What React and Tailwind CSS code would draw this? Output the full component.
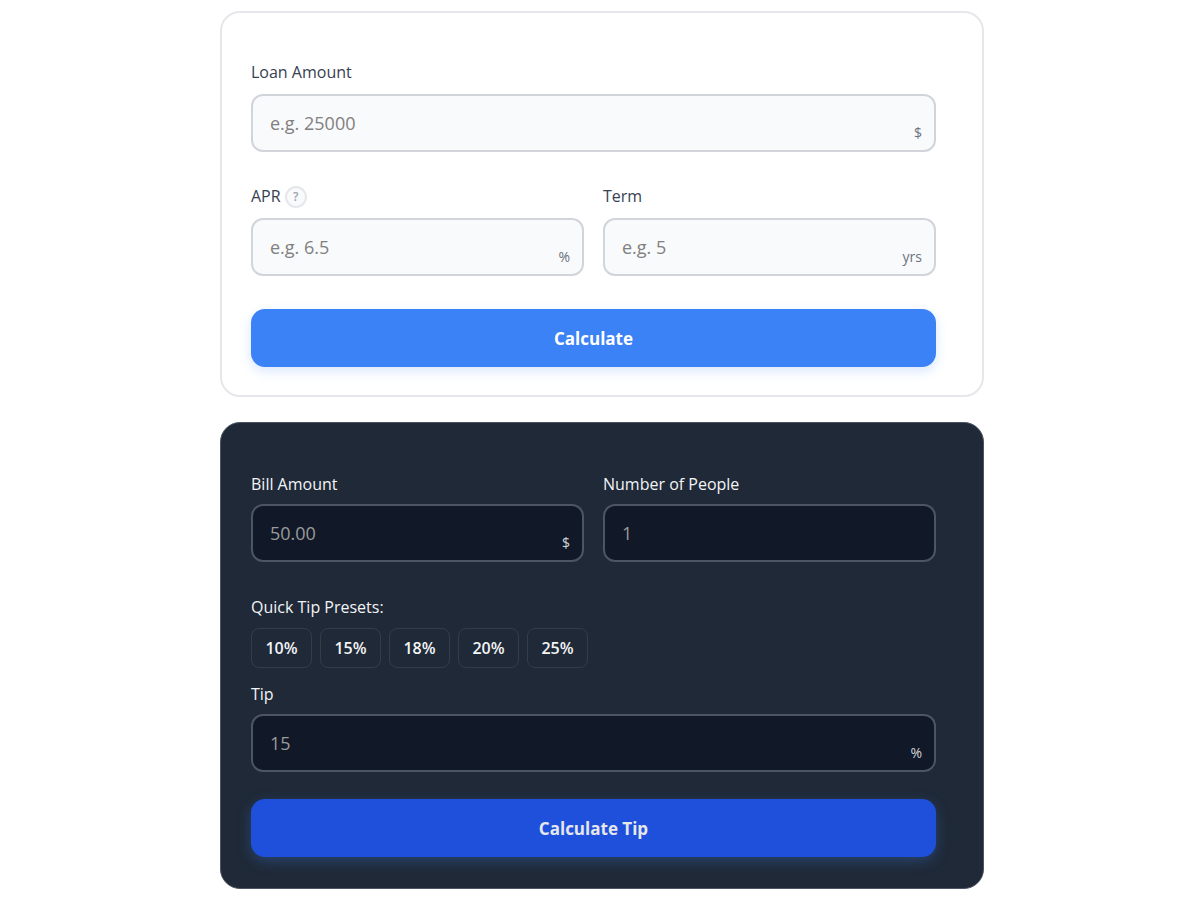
import React, { useState } from "react";

const tipPresets = [10, 15, 18, 20, 25];

const themes = {
  light: {
    card: "border-2 border-[#e5e7eb] bg-white pt-[47px] pr-[46px] pb-7 pl-[29px]",
    label: "mb-[10px] text-[#374151]",
    input: "border-[#d1d5db] bg-[#f9fafb] text-[#111827] placeholder:text-[#808080]",
    suffix: "text-[#6b7280]",
    button: "bg-[#3b82f6] text-white shadow-[0_4px_12px_rgba(59,130,246,0.2)] hover:bg-[#2563eb]",
  },
  dark: {
    card: "border border-[#4b5563] bg-[#1f2937] pt-[49px] pr-[47px] pb-[31px] pl-[30px]",
    label: "mb-2 text-[#f3f4f6]",
    input: "border-[#4b5563] bg-[#111827] text-[#f9fafb] placeholder:text-[#9b9b9b]",
    suffix: "text-[#d1d5db]",
    button: "bg-[#1e50dc] text-[#e5e7eb] shadow-[0_4px_14px_rgba(59,130,246,0.3)] hover:bg-[#1d4ed8]",
  },
};

const Card = ({ theme, onSubmit, children }) => (
  <form
    onSubmit={(e) => {
      e.preventDefault();
      onSubmit?.();
    }}
    className={`w-full max-w-[764px] rounded-[20px] ${themes[theme].card}`}
  >
    {children}
  </form>
);

const Field = ({ id, label, theme, suffix, hint, ...inputProps }) => (
  <div className="min-w-0">
    <div className={`flex h-6 items-end gap-1 text-[16px] leading-6 ${themes[theme].label}`}>
      <label htmlFor={id}>{label}</label>
      {hint && (
        <button
          type="button"
          title={hint}
          className="flex size-[22px] items-center justify-center rounded-full border-2 border-[#e5e7eb] bg-[#f9fafb] text-[12px] leading-4 font-semibold text-[#9ca3af]"
        >
          ?
        </button>
      )}
    </div>
    <div className="relative">
      <input
        id={id}
        type="text"
        inputMode="decimal"
        className={`block h-[58px] w-full rounded-xl border-2 px-[17px] text-[18px] leading-6 outline-none focus:border-blue-500 ${themes[theme].input}`}
        {...inputProps}
      />
      {suffix && (
        <span
          className={`pointer-events-none absolute right-[14px] bottom-[9px] text-[14px] leading-5 ${themes[theme].suffix}`}
        >
          {suffix}
        </span>
      )}
    </div>
  </div>
);

const SubmitButton = ({ theme, children }) => (
  <button
    type="submit"
    className={`block h-[58px] w-full cursor-pointer rounded-[14px] pt-[2px] text-[17px] leading-6 font-bold ${themes[theme].button}`}
  >
    {children}
  </button>
);

const LoanCalculator = () => (
  <Card theme="light">
    <Field id="loan-amount" label="Loan Amount" theme="light" suffix="$" placeholder="e.g. 25000" />
    <div className="mt-8 mb-[33px] grid grid-cols-2 gap-[19px]">
      <Field
        id="apr"
        label="APR"
        theme="light"
        suffix="%"
        placeholder="e.g. 6.5"
        hint="Annual Percentage Rate"
      />
      <Field id="term" label="Term" theme="light" suffix="yrs" placeholder="e.g. 5" />
    </div>
    <SubmitButton theme="light">Calculate</SubmitButton>
  </Card>
);

const TipCalculator = () => {
  const [tip, setTip] = useState("");

  return (
    <Card theme="dark">
      <div className="grid grid-cols-2 gap-[19px]">
        <Field id="bill" label="Bill Amount" theme="dark" suffix="$" placeholder="50.00" />
        <Field id="people" label="Number of People" theme="dark" placeholder="1" />
      </div>

      {/* Presets */}
      <div className="mt-[33px] mb-[14px]">
        <p className="mb-[9px] text-[16px] leading-6 text-[#f3f4f6]">Quick Tip Presets:</p>
        <div className="flex flex-wrap gap-2">
          {tipPresets.map((preset) => (
            <button
              key={preset}
              type="button"
              onClick={() => setTip(String(preset))}
              className="h-10 w-[61px] cursor-pointer rounded-lg border border-[#323d4b] text-[16px] leading-6 font-semibold text-[#f3f4f6] hover:bg-[#374151]"
            >
              {preset}%
            </button>
          ))}
        </div>
      </div>

      <Field
        id="tip"
        label="Tip"
        theme="dark"
        suffix="%"
        placeholder="15"
        value={tip}
        onChange={(e) => setTip(e.target.value)}
      />
      <div className="mt-[27px]">
        <SubmitButton theme="dark">Calculate Tip</SubmitButton>
      </div>
    </Card>
  );
};

const App = () => (
  <main className="flex min-h-screen flex-col items-center gap-[25px] bg-white pt-[11px] pb-[11px] pl-1 font-['Open_Sans','Noto_Sans',sans-serif]">
    <LoanCalculator />
    <TipCalculator />
  </main>
);

export default App;
